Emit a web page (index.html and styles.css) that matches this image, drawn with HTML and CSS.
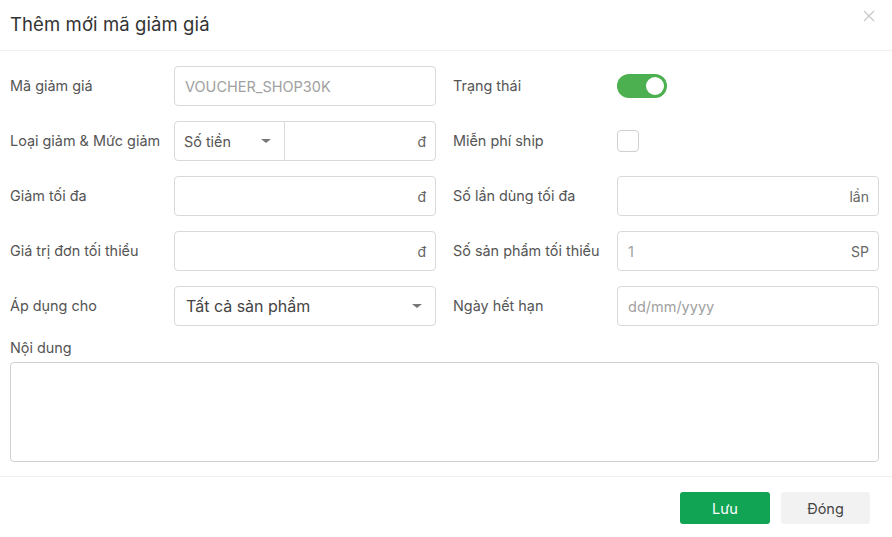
FILE: index.html
```html
<!DOCTYPE html>
<html>
  <head>
    <meta charset="utf-8" />
    <title>Thêm mới mã giảm giá</title>
    <link rel="stylesheet" href="styles.css">
  </head>
  <body>
    <div class="modal">
      <!-- header -->
      <div class="modal-header">
        <div class="modal-title">Thêm mới mã giảm giá</div>
        <span class="modal-close">
          <svg width="12" height="12" viewBox="0 0 12 12"><path d="M1 1L11 11M11 1L1 11" stroke="#c8c8c8" stroke-width="1.3" fill="none"/></svg>
        </span>
      </div>

      <!-- body -->
      <div class="modal-body">
        <div class="form-grid">
          <label class="field-label">Mã giảm giá</label>
          <div class="input-box"><span class="placeholder">VOUCHER_SHOP30K</span></div>
          <label class="field-label">Trạng thái</label>
          <div class="field-plain">
            <span class="toggle"><span class="toggle-knob"></span></span>
          </div>

          <label class="field-label">Loại giảm &amp; Mức giảm</label>
          <div class="input-group">
            <div class="group-select">
              <span>Số tiền</span>
              <span class="caret"></span>
            </div>
            <div class="group-input"><span class="suffix">đ</span></div>
          </div>
          <label class="field-label">Miễn phí ship</label>
          <div class="field-plain"><span class="checkbox"></span></div>

          <label class="field-label">Giảm tối đa</label>
          <div class="input-box"><span class="suffix">đ</span></div>
          <label class="field-label">Số lần dùng tối đa</label>
          <div class="input-box"><span class="suffix">lần</span></div>

          <label class="field-label">Giá trị đơn tối thiểu</label>
          <div class="input-box"><span class="suffix">đ</span></div>
          <label class="field-label">Số sản phẩm tối thiểu</label>
          <div class="input-box"><span class="placeholder">1</span><span class="suffix">SP</span></div>

          <label class="field-label">Áp dụng cho</label>
          <div class="input-box select-box"><span class="select-value">Tất cả sản phẩm</span><span class="caret"></span></div>
          <label class="field-label">Ngày hết hạn</label>
          <div class="input-box"><span class="placeholder">dd/mm/yyyy</span></div>
        </div>

        <div class="content-field">
          <label class="field-label">Nội dung</label>
          <div class="textarea"></div>
        </div>
      </div>

      <!-- footer -->
      <div class="modal-footer">
        <button class="btn btn-save">Lưu</button>
        <button class="btn btn-close">Đóng</button>
      </div>
    </div>
  </body>
</html>
```

FILE: styles.css
```css
* {
  box-sizing: border-box;
}
body {
  margin: 0;
  background: #fff;
  font-family: Inter, "Noto Sans", sans-serif;
  color: #444;
}

.modal {
  width: 892px;
  height: 537px;
  background: #fff;
}

/* header */
.modal-header {
  height: 51px;
  display: flex;
  align-items: center;
  justify-content: space-between;
  padding: 0 17px 2px 10px;
  border-bottom: 1px solid #f0f0f0;
}
.modal-title {
  font-size: 18.5px;
  color: #333;
  letter-spacing: 0.1px;
}
.modal-close {
  display: flex;
  margin-top: -17px;
}

/* body */
.modal-body {
  padding: 15px 13px 14px 10px;
  border-bottom: 1px solid #f0f0f0;
}
.form-grid {
  display: grid;
  grid-template-columns: 164px 262px 181px 262px;
  grid-auto-rows: 40px;
  row-gap: 15px;
}
/* right label column gets the gutter */
.form-grid > :nth-child(4n+3) {
  padding-left: 17px;
}

.field-label {
  display: flex;
  align-items: center;
  font-size: 14.4px;
  color: #555;
  padding-bottom: 2px;
}
.input-box {
  display: flex;
  align-items: center;
  justify-content: space-between;
  border: 1px solid #d9d9d9;
  border-radius: 4px;
  padding: 0 9px 0 10px;
  font-size: 14px;
}
.placeholder {
  color: #a0a0a0;
  font-size: 14.5px;
}
.suffix {
  margin-left: auto;
  color: #666;
  font-size: 14px;
}
.field-plain {
  display: flex;
  align-items: center;
}

.toggle {
  width: 50px;
  height: 24px;
  border-radius: 12px;
  background: #4caf50;
  display: flex;
  align-items: center;
  justify-content: flex-end;
  padding-right: 3px;
}
.toggle-knob {
  width: 18px;
  height: 18px;
  border-radius: 50%;
  background: #fff;
}
.checkbox {
  width: 22px;
  height: 22px;
  border: 1px solid #cfcfcf;
  border-radius: 4px;
}

.input-group {
  display: flex;
  border: 1px solid #d9d9d9;
  border-radius: 4px;
}
.group-select {
  width: 110px;
  display: flex;
  align-items: center;
  justify-content: space-between;
  padding: 0 13px 0 9px;
  border-right: 1px solid #d9d9d9;
  font-size: 14.4px;
  color: #555;
}
.group-input {
  flex: 1;
  display: flex;
  align-items: center;
  padding: 0 9px;
}
.caret {
  width: 0;
  height: 0;
  border-left: 5px solid transparent;
  border-right: 5px solid transparent;
  border-top: 4px solid #777;
}
.select-box {
  padding: 0 13px 0 11px;
}
.select-value {
  font-size: 16px;
  color: #444;
}

.content-field {
  margin-top: 11px;
}
.content-field .field-label {
  height: 22px;
  margin-bottom: 3px;
}
.textarea {
  height: 100px;
  border: 1px solid #d0d0d0;
  border-radius: 4px;
}

/* footer */
.modal-footer {
  display: flex;
  justify-content: flex-end;
  gap: 11px;
  padding: 15px 22px 0 0;
}
.btn {
  height: 32px;
  border: none;
  border-radius: 3px;
  font-family: Inter, "Noto Sans", sans-serif;
  font-size: 14.5px;
  cursor: pointer;
}
.btn-save {
  width: 90px;
  background: #12a455;
  color: #fff;
}
.btn-close {
  width: 89px;
  background: #f2f2f2;
  color: #444;
}
```
